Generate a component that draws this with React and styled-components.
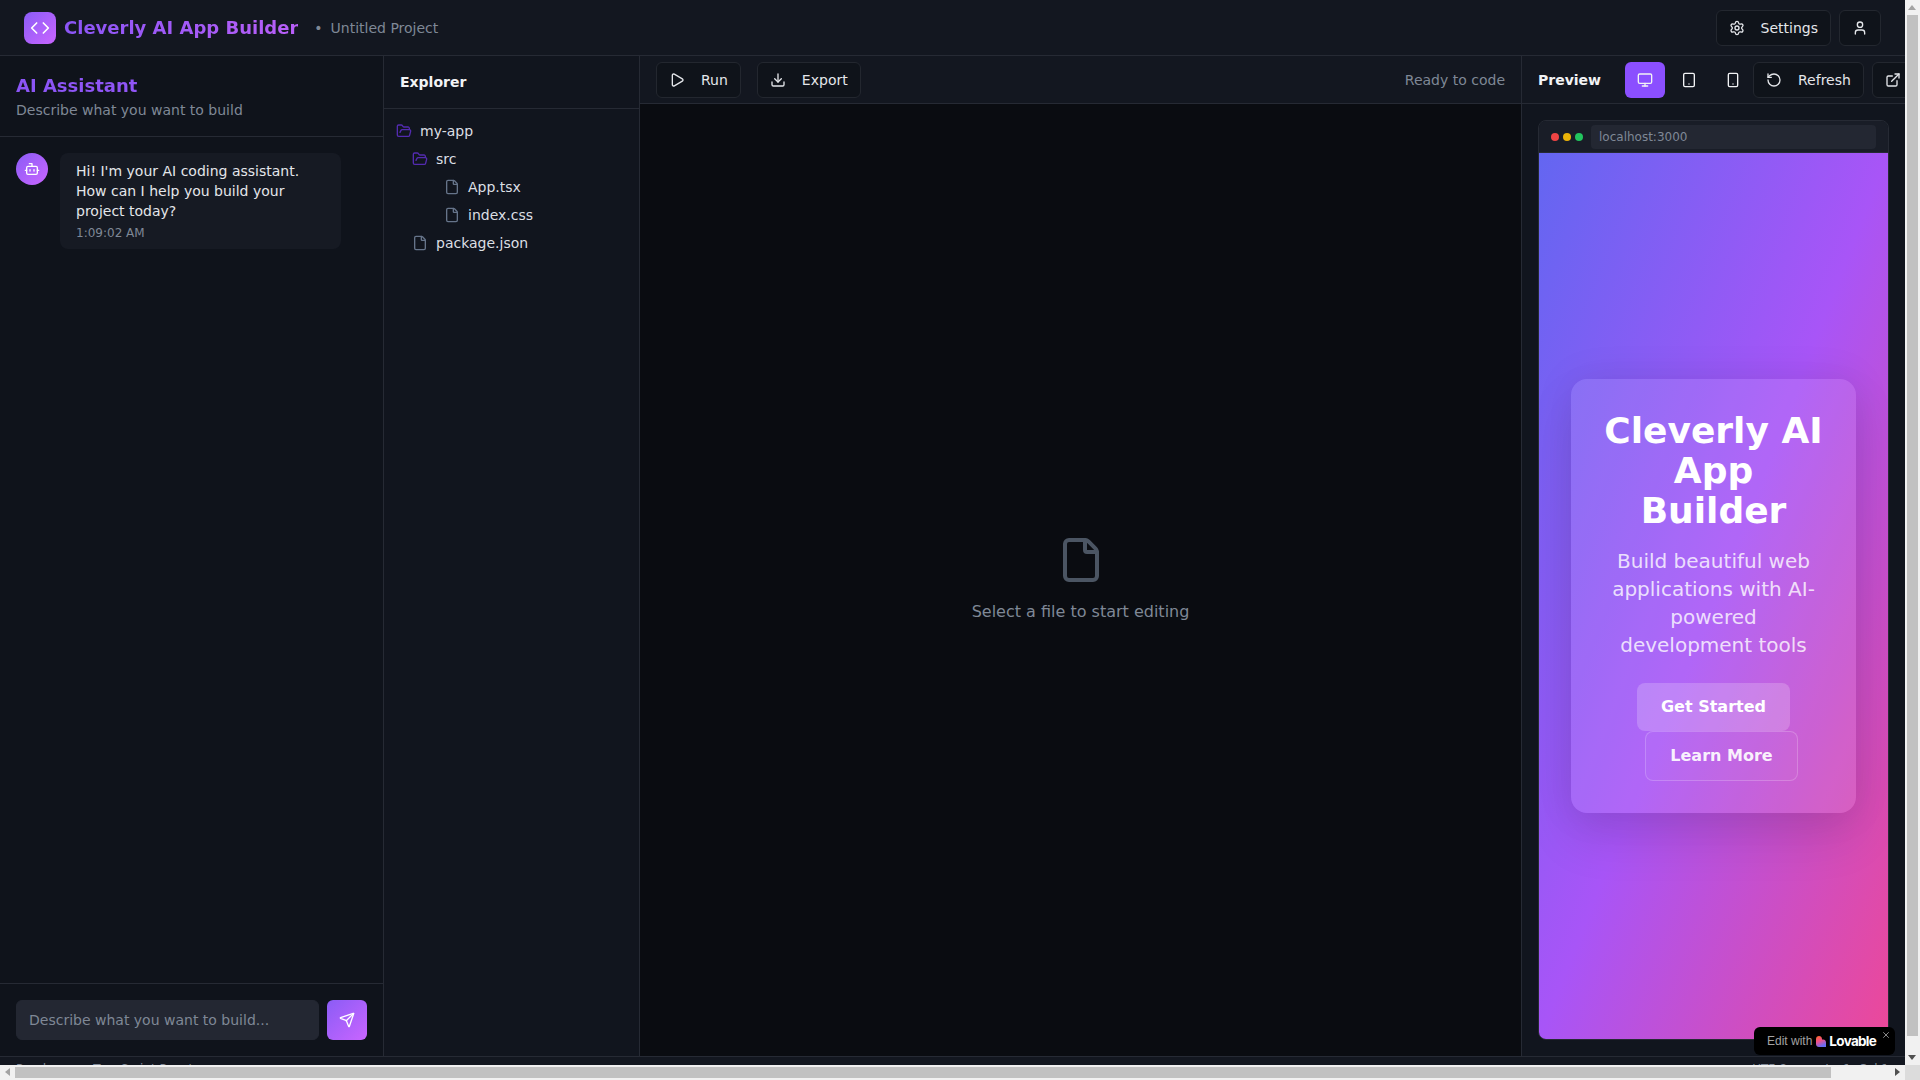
import React from 'react';
import styled, { createGlobalStyle } from 'styled-components';
import { Code, Bot, FolderOpen, File, Play, Download, Settings, User, Monitor, Tablet, Smartphone, RotateCcw, ExternalLink, Send, X } from 'lucide-react';

const Global = createGlobalStyle`
  * { box-sizing: border-box; }
  html, body { margin: 0; padding: 0; background: #0a0c11; overflow: hidden; }
  body { font-family: "DejaVu Sans", sans-serif; color: #e4e6ea; }
`;

const Shell = styled.div`
  display: flex;
  flex-direction: column;
  height: 100vh;
  width: calc(100% - 15px);
`;

const TopBar = styled.header`
  flex: 0 0 56px;
  display: flex;
  align-items: center;
  justify-content: space-between;
  padding: 0 24px;
  background: #131720;
  border-bottom: 1px solid #262a34;
`;

const Row = styled.div`
  display: flex;
  align-items: center;
  gap: ${p => p.$gap || 8}px;
`;

const Logo = styled.div`
  width: 32px;
  height: 32px;
  border-radius: 8px;
  display: flex;
  align-items: center;
  justify-content: center;
  color: #fff;
  background: linear-gradient(135deg, #8b5cf6, #c965ff);
`;

const AppTitle = styled.h1`
  margin: 0;
  font-size: 18px;
  line-height: 28px;
  font-weight: 700;
  background: linear-gradient(90deg, #8b55f6, #b95ff8);
  -webkit-background-clip: text;
  background-clip: text;
  color: transparent;
`;

const ProjectName = styled(Row)`
  margin-left: 8px;
`;

const Muted = styled.span`
  font-size: 14px;
  line-height: 20px;
  color: #7f8896;
`;

const Btn = styled.button`
  height: 36px;
  padding: 0 12px;
  display: inline-flex;
  flex: none;
  align-items: center;
  justify-content: center;
  gap: 16px;
  border-radius: 6px;
  border: 1px solid #23272f;
  background: #0f131a;
  color: #e4e6ea;
  font: 14px/20px "DejaVu Sans", sans-serif;
`;

const Main = styled.main`
  flex: 1 1 0;
  min-height: 0;
  display: flex;
`;

const ChatPanel = styled.section`
  flex: 0 0 384px;
  display: flex;
  flex-direction: column;
  background: #0f131b;
  border-right: 1px solid #262a34;
`;

const ChatHead = styled.div`
  padding: 16px;
  border-bottom: 1px solid #262a34;
`;

const ChatTitle = styled.h2`
  margin: 0;
  font-size: 18px;
  line-height: 28px;
  font-weight: 700;
  background: linear-gradient(90deg, #8b55f6, #9d57f6);
  -webkit-background-clip: text;
  background-clip: text;
  color: transparent;
`;

const ChatSub = styled.p`
  margin: 0;
  font-size: 14px;
  line-height: 20px;
  color: #7f8896;
`;

const Messages = styled.div`
  flex: 1;
  padding: 16px;
`;

const Message = styled.div`
  display: flex;
  align-items: flex-start;
  gap: 12px;
`;

const Avatar = styled.div`
  flex: 0 0 32px;
  height: 32px;
  border-radius: 50%;
  display: flex;
  align-items: center;
  justify-content: center;
  color: #fff;
  background: linear-gradient(135deg, #8b5cf6, #c965ff);
`;

const Bubble = styled.div`
  max-width: 80%;
  padding: 8px 16px;
  border-radius: 8px;
  background: #161a23;
  font-size: 14px;
  line-height: 20px;
  color: #e4e6ea;
`;

const Time = styled.div`
  margin-top: 4px;
  font-size: 12px;
  line-height: 16px;
  color: #7f8896;
`;

const Composer = styled.div`
  display: flex;
  gap: 8px;
  padding: 16px;
  border-top: 1px solid #262a34;
`;

const Input = styled.input`
  flex: 1;
  min-width: 0;
  height: 40px;
  padding: 0 12px;
  border: 1px solid #232732;
  border-radius: 6px;
  background: #232732;
  color: #e4e6ea;
  font: 14px "DejaVu Sans", sans-serif;
  &::placeholder { color: #7f8896; opacity: 1; }
`;

const SendBtn = styled.button`
  flex: 0 0 40px;
  height: 40px;
  padding: 0;
  border: 0;
  border-radius: 6px;
  display: flex;
  align-items: center;
  justify-content: center;
  color: #fff;
  background: linear-gradient(135deg, #8b5cf6, #c965ff);
`;

const ExplorerPanel = styled.aside`
  flex: 0 0 256px;
  background: #11151e;
  border-right: 1px solid #262a34;
`;

const ExplorerHead = styled.div`
  padding: 16px;
  border-bottom: 1px solid #262a34;
  font-size: 14px;
  line-height: 20px;
  font-weight: 700;
  color: #f2f3f5;
`;

const Tree = styled.div`
  padding-top: 8px;
`;

const TreeRow = styled.div`
  height: 28px;
  display: flex;
  align-items: center;
  gap: 8px;
  padding-left: ${p => p.$indent}px;
  font-size: 14px;
  color: #dcdfe4;
  svg { flex: none; color: ${p => (p.$folder ? '#532bb0' : '#66748a')}; }
`;

const EditorPanel = styled.section`
  flex: 1 1 0;
  min-width: 0;
  display: flex;
  flex-direction: column;
  background: #0a0c11;
`;

const ToolBar = styled.div`
  flex: 0 0 48px;
  display: flex;
  align-items: center;
  justify-content: space-between;
  padding: 0 16px;
  background: #131720;
  border-bottom: 1px solid #262a34;
`;

const Empty = styled.div`
  flex: 1;
  display: flex;
  flex-direction: column;
  align-items: center;
  justify-content: center;
  gap: 16px;
  color: #7f8896;
  font-size: 16px;
  line-height: 24px;
  svg { color: #4b5563; }
`;

const PreviewPanel = styled.section`
  flex: 0 0 384px;
  width: 384px;
  display: flex;
  flex-direction: column;
  background: #11151e;
  border-left: 1px solid #262a34;
`;

const PreviewBar = styled(ToolBar)`
  justify-content: flex-start;
`;

const PreviewTitle = styled.span`
  font-size: 14px;
  line-height: 20px;
  font-weight: 700;
  color: #f2f3f5;
  margin-right: 24px;
  flex: none;
`;

const ModeBtn = styled.button`
  width: 40px;
  height: 36px;
  flex: none;
  padding: 0;
  border: 0;
  border-radius: 6px;
  display: flex;
  align-items: center;
  justify-content: center;
  color: #f2f3f5;
  background: ${p => (p.$active ? '#8b4fff' : 'transparent')};
`;

const FrameWrap = styled.div`
  flex: 1;
  min-height: 0;
  padding: 16px;
  display: flex;
`;

const Frame = styled.div`
  flex: 1;
  min-width: 0;
  display: flex;
  flex-direction: column;
  border: 1px solid #262a34;
  border-radius: 8px;
  overflow: hidden;
`;

const FrameBar = styled.div`
  flex: 0 0 32px;
  display: flex;
  align-items: center;
  gap: 8px;
  padding: 0 12px;
  background: #191d27;
  border-bottom: 1px solid #262a34;
`;

const Dots = styled.div`
  display: flex;
  gap: 4px;
`;

const Dot = styled.span`
  width: 8px;
  height: 8px;
  border-radius: 50%;
  background: ${p => p.$c};
`;

const Url = styled.div`
  flex: 1;
  height: 24px;
  padding: 0 8px;
  display: flex;
  align-items: center;
  border-radius: 4px;
  background: #232732;
  font-size: 12px;
  color: #7f8896;
`;

const Stage = styled.div`
  flex: 1;
  min-height: 0;
  display: flex;
  align-items: center;
  justify-content: center;
  padding: 0 32px;
  background: linear-gradient(to bottom right, #6366f1 0%, #a855f7 50%, #ec4899 100%);
`;

const Card = styled.div`
  width: 100%;
  padding: 32px;
  border-radius: 16px;
  text-align: center;
  color: #fff;
  background: rgba(255, 255, 255, 0.1);
  box-shadow: 0 25px 50px rgba(0, 0, 0, 0.1), 0 0 40px rgba(0, 0, 0, 0.08);
`;

const Hero = styled.h1`
  margin: 0 0 16px;
  font-size: 36px;
  line-height: 40px;
  font-weight: 700;
`;

const Lead = styled.p`
  margin: 0 0 24px;
  font-size: 20px;
  line-height: 28px;
  color: rgba(255, 255, 255, 0.8);
`;

const CardBtn = styled.button`
  display: inline-block;
  padding: 12px 24px;
  margin-left: ${p => (p.$outline ? 16 : 0)}px;
  border-radius: 8px;
  border: ${p => (p.$outline ? '1px solid rgba(255,255,255,.2)' : '0')};
  background: ${p => (p.$outline ? 'rgba(255,255,255,.03)' : 'rgba(255,255,255,.2)')};
  color: ${p => (p.$outline ? 'rgba(255,255,255,.92)' : '#fff')};
  font: 700 16px/24px "DejaVu Sans", sans-serif;
`;

const Footer = styled.footer`
  flex: 0 0 24px;
  display: flex;
  align-items: center;
  justify-content: space-between;
  padding: 0 16px;
  background: #131720;
  border-top: 1px solid #262a34;
  font-size: 12px;
  line-height: 16px;
  color: #7f8896;
`;

const Badge = styled.div`
  position: fixed;
  right: 25px;
  bottom: 25px;
  width: 141px;
  height: 28px;
  display: flex;
  align-items: center;
  padding-left: 13px;
  border-radius: 6px;
  background: #000;
`;

const BadgeText = styled.span`
  font: 12px "Liberation Sans", sans-serif;
  color: #a3a3a3;
  margin-right: 4px;
`;

const BadgeBrand = styled.span`
  font: 700 13.5px "Inter", sans-serif;
  letter-spacing: -0.7px;
  color: #fff;
  margin-left: 3px;
`;

const BadgeClose = styled.span`
  position: absolute;
  right: 4px;
  top: 3px;
  display: flex;
  color: #a3a3a3;
`;

const ScrollV = styled.div`
  position: fixed;
  top: 0;
  right: 0;
  bottom: 15px;
  width: 15px;
  background: #f1f1f1;
`;

const ScrollH = styled.div`
  position: fixed;
  left: 0;
  right: 15px;
  bottom: 0;
  height: 15px;
  background: #f1f1f1;
`;

const ScrollCorner = styled.div`
  position: fixed;
  right: 0;
  bottom: 0;
  width: 15px;
  height: 15px;
  background: #dcdcdc;
`;

const ThumbV = styled.div`
  position: absolute;
  left: 2px;
  top: 15px;
  width: 11px;
  height: 1021px;
  background: #c1c1c1;
`;

const ThumbH = styled.div`
  position: absolute;
  left: 15px;
  top: 2px;
  width: 1816px;
  height: 11px;
  background: #c1c1c1;
`;

const ArrowUp = styled.span`
  position: absolute;
  left: 3px;
  top: 5px;
  border-left: 4.5px solid transparent;
  border-right: 4.5px solid transparent;
  border-bottom: 5px solid #a3a3a3;
`;

const ArrowDown = styled.span`
  position: absolute;
  left: 3px;
  bottom: 5px;
  border-left: 4.5px solid transparent;
  border-right: 4.5px solid transparent;
  border-top: 5px solid #505050;
`;

const ArrowLeft = styled.span`
  position: absolute;
  left: 5px;
  top: 3px;
  border-top: 4.5px solid transparent;
  border-bottom: 4.5px solid transparent;
  border-right: 5px solid #a3a3a3;
`;

const ArrowRight = styled.span`
  position: absolute;
  right: 5px;
  top: 3px;
  border-top: 4.5px solid transparent;
  border-bottom: 4.5px solid transparent;
  border-left: 5px solid #505050;
`;

const Heart = () => (
  <svg width="10" height="11" viewBox="0 0 10 11">
    <defs>
      <linearGradient id="lv" x1="0" y1="0" x2="0.4" y2="1">
        <stop offset="0" stopColor="#ff6a1f" />
        <stop offset="0.5" stopColor="#f0508a" />
        <stop offset="1" stopColor="#6a6cf5" />
      </linearGradient>
    </defs>
    <path d="M3 0C4.7 0 6 1.3 6 3V3.6H7.2C8.8 3.6 10 4.9 10 6.4V11H3C1.3 11 0 9.7 0 8V3C0 1.3 1.3 0 3 0Z" fill="url(#lv)" />
  </svg>
);

export default function App() {
  return (
    <Shell>
      <Global />
      <TopBar>
        <Row>
          <Logo><Code size={20} /></Logo>
          <AppTitle>Cleverly AI App Builder</AppTitle>
          <ProjectName>
            <Muted>•</Muted>
            <Muted>Untitled Project</Muted>
          </ProjectName>
        </Row>
        <Row>
          <Btn><Settings size={16} />Settings</Btn>
          <Btn><User size={16} /></Btn>
        </Row>
      </TopBar>
      <Main>
        <ChatPanel>
          <ChatHead>
            <ChatTitle>AI Assistant</ChatTitle>
            <ChatSub>Describe what you want to build</ChatSub>
          </ChatHead>
          <Messages>
            <Message>
              <Avatar><Bot size={16} /></Avatar>
              <Bubble>
                Hi! I'm your AI coding assistant. How can I help you build your project today?
                <Time>1:09:02 AM</Time>
              </Bubble>
            </Message>
          </Messages>
          <Composer>
            <Input placeholder="Describe what you want to build..." />
            <SendBtn><Send size={16} /></SendBtn>
          </Composer>
        </ChatPanel>
        <ExplorerPanel>
          <ExplorerHead>Explorer</ExplorerHead>
          <Tree>
            <TreeRow $indent={12} $folder><FolderOpen size={16} />my-app</TreeRow>
            <TreeRow $indent={28} $folder><FolderOpen size={16} />src</TreeRow>
            <TreeRow $indent={60}><File size={16} />App.tsx</TreeRow>
            <TreeRow $indent={60}><File size={16} />index.css</TreeRow>
            <TreeRow $indent={28}><File size={16} />package.json</TreeRow>
          </Tree>
        </ExplorerPanel>
        <EditorPanel>
          <ToolBar>
            <Row $gap={16}>
              <Btn><Play size={16} />Run</Btn>
              <Btn><Download size={16} />Export</Btn>
            </Row>
            <Muted>Ready to code</Muted>
          </ToolBar>
          <Empty>
            <File size={48} />
            Select a file to start editing
          </Empty>
        </EditorPanel>
        <PreviewPanel>
          <PreviewBar>
            <PreviewTitle>Preview</PreviewTitle>
            <Row $gap={4}>
              <ModeBtn $active><Monitor size={16} /></ModeBtn>
              <ModeBtn><Tablet size={16} /></ModeBtn>
              <ModeBtn><Smartphone size={16} /></ModeBtn>
            </Row>
            <Row>
              <Btn><RotateCcw size={16} />Refresh</Btn>
              <Btn><ExternalLink size={16} /></Btn>
            </Row>
          </PreviewBar>
          <FrameWrap>
            <Frame>
              <FrameBar>
                <Dots>
                  <Dot $c="#ef4444" />
                  <Dot $c="#eab308" />
                  <Dot $c="#22c55e" />
                </Dots>
                <Url>localhost:3000</Url>
              </FrameBar>
              <Stage>
                <Card>
                  <Hero>Cleverly AI App Builder</Hero>
                  <Lead>Build beautiful web applications with AI-powered development tools</Lead>
                  <CardBtn>Get Started</CardBtn>
                  <CardBtn $outline>Learn More</CardBtn>
                </Card>
              </Stage>
            </Frame>
          </FrameWrap>
        </PreviewPanel>
      </Main>
      <Footer>
        <Row $gap={40}>
          <span>Ready</span>
          <span>TypeScript React</span>
        </Row>
        <Row $gap={38}>
          <span>UTF-8</span>
          <span>Ln 1, Col 1</span>
        </Row>
      </Footer>
      <Badge>
        <BadgeText>Edit with</BadgeText>
        <Heart />
        <BadgeBrand>Lovable</BadgeBrand>
        <BadgeClose><X size={10} /></BadgeClose>
      </Badge>
      <ScrollV>
        <ArrowUp />
        <ThumbV />
        <ArrowDown />
      </ScrollV>
      <ScrollH>
        <ArrowLeft />
        <ThumbH />
        <ArrowRight />
      </ScrollH>
      <ScrollCorner />
    </Shell>
  );
}
